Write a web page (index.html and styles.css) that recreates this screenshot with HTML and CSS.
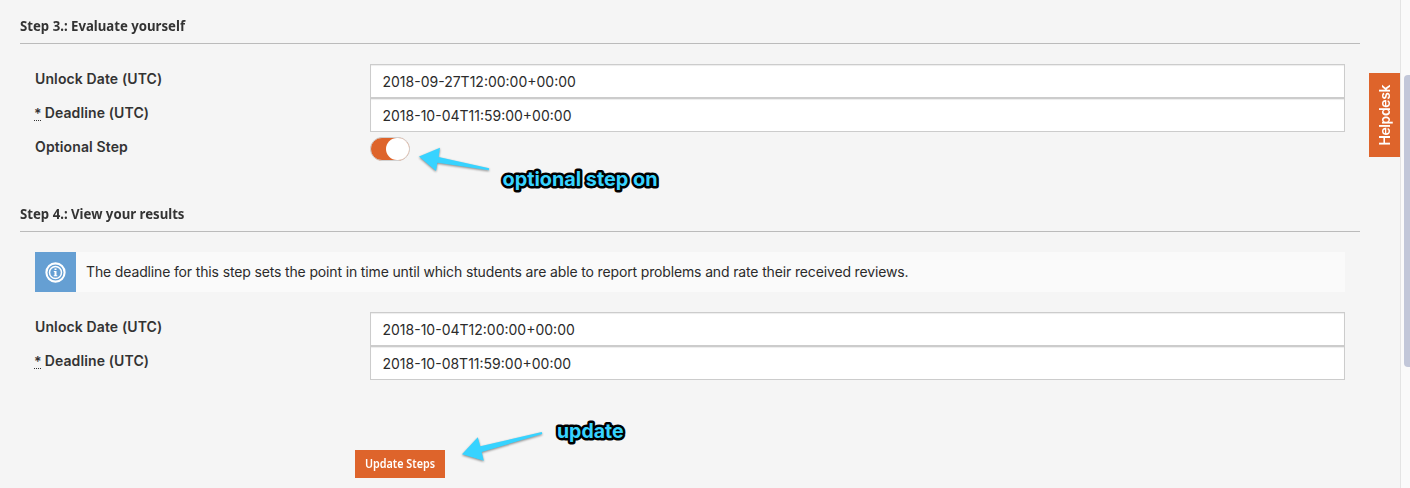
FILE: index.html
```html
<!DOCTYPE html>
<html lang="en">
<head>
<meta charset="utf-8">
<title>Update Steps</title>
<link rel="stylesheet" href="styles.css">
</head>
<body>
<div class="page">
  <main class="content">
    <section class="step step-evaluate">
      <h2 class="step-title"><span>Step 3.: Evaluate yourself</span></h2>
      <div class="fields">
        <div class="field"><label class="label">Unlock Date (UTC)</label><input class="input" value="2018-09-27T12:00:00+00:00"></div>
        <div class="field"><label class="label"><abbr class="req">*</abbr> Deadline (UTC)</label><input class="input" value="2018-10-04T11:59:00+00:00"></div>
        <div class="field"><span class="label">Optional Step</span><span class="toggle"><span class="knob"></span></span></div>
      </div>
    </section>
    <section class="step">
      <h2 class="step-title"><span>Step 4.: View your results</span></h2>
      <div class="notice">
        <div class="notice-icon">
          <svg width="21" height="21" viewBox="0 0 21 21">
            <circle cx="10.5" cy="10.5" r="9.1" fill="none" stroke="#fff" stroke-width="2.1"/>
            <circle cx="10.5" cy="10.5" r="6" fill="none" stroke="#fff" stroke-width="1.5"/>
            <path d="M9.500 6.500h2v1.600H9.500zM8.800 9h2.700v4.200h.8v1.100H8.700v-1.100h.8V10.100h-.7z" fill="#fff"/>
          </svg>
        </div>
        <p class="notice-text"><span>The deadline for this step sets the point in time until which students are able to report problems and rate their received reviews.</span></p>
      </div>
      <div class="fields">
        <div class="field"><label class="label">Unlock Date (UTC)</label><input class="input" value="2018-10-04T12:00:00+00:00"></div>
        <div class="field"><label class="label"><abbr class="req">*</abbr> Deadline (UTC)</label><input class="input" value="2018-10-08T11:59:00+00:00"></div>
      </div>
    </section>
    <button class="submit"><span>Update Steps</span></button>
  </main>
  <div class="scrollbar"><div class="thumb"></div></div>
  <div class="helpdesk"><span>Helpdesk</span></div>
  <svg class="notes" width="1410" height="488" viewBox="0 0 1410 488">
    <g class="arrow">
      <path d="M419 156.500 440 147.800 438.600 157 489.200 168.300 488.800 170.200 437.400 162.800 436 171z"/>
      <path d="M462 454.300 477.800 437.300 480.300 446.200 541.800 432 542.200 434 481.700 452 483.800 460.800z"/>
    </g>
    <text class="note" x="502.500" y="186" textLength="155" lengthAdjust="spacingAndGlyphs">optional step on</text>
    <text class="note" x="557" y="438" textLength="66.500" lengthAdjust="spacingAndGlyphs">update</text>
  </svg>
</div>
</body>
</html>
```
FILE: styles.css
```css
* { box-sizing: border-box; }
body { margin: 0; background: #f5f5f5; color: #333; font: 14px/20px Inter, "Liberation Sans", sans-serif; overflow: hidden; }
.page { position: relative; display: flex; height: 488px; overflow: hidden; }
.content { flex: 1; padding: 0 40px 0 20px; }
.step-title { margin: 0; height: 44px; padding-top: 16px; border-bottom: 1px solid #bbb; font: 700 14px/20px "Noto Sans", sans-serif; white-space: nowrap; }
.step-title span { display: inline-block; transform: scaleX(.942); transform-origin: 0 50%; }
.step-evaluate { height: 188px; }
.fields { padding: 20px 15px 0; }
.field { display: flex; height: 34px; }
.label { width: 335px; padding-top: 5px; font-weight: 600; letter-spacing: .12px; white-space: pre; }
.req { text-decoration: none; border-bottom: 1px dotted #333; display: inline-block; line-height: 14px; height: 14px; width: 7px; margin: 0 0 0 -1px; vertical-align: -1px; }
.input { flex: 1; min-width: 0; height: 34px; padding: 1px 12px 0; border: 1px solid #ccc; background: #fff; box-shadow: inset 0 1px 1px rgba(0,0,0,.075); color: #2b2b2b; font: 14px/20px Inter, sans-serif; text-indent: -.5px; border-radius: 0; }
.toggle { width: 40px; height: 24px; margin-top: 5px; border: 1px solid #d0d0d0; border-radius: 12px; background: #de642b; display: flex; justify-content: flex-end; }
.knob { width: 23px; height: 22px; border-radius: 11px; background: #fff; }
.notice { display: flex; height: 40px; margin: 20px 15px 0; background: #fafafa; }
.notice-icon { width: 41px; padding-right: 1px; display: flex; align-items: center; justify-content: center; background: #659fd3; }
.notice-text { margin: 0; padding: 10px; white-space: nowrap; letter-spacing: -.145px; color: #2b2b2b; }
.submit { display: flex; align-items: center; justify-content: center; width: 90px; height: 28px; margin: 70px 0 0 335px; padding: 0 1px 0 0; border: 0; background: #de642b; color: #fff; font: 600 12px/16px "Noto Sans", sans-serif; white-space: nowrap; }
.submit span { transform: scaleX(.9); }
.scrollbar { width: 10px; padding: 75px 0 0 3px; border-left: 1px solid #e4e4e4; background: #fafafa; }
.thumb { height: 292px; border-radius: 4px 0 0 4px; background: #c2c7d9; }
.helpdesk { position: absolute; left: 1369px; top: 73px; width: 31px; height: 84px; padding-top: 1px; display: flex; align-items: center; justify-content: center; background: #de642b; color: #fff; font: 600 14px/20px Inter, sans-serif; letter-spacing: -.4px; }
.helpdesk span { writing-mode: vertical-rl; transform: rotate(180deg); }
.notes { position: absolute; left: 0; top: 0; pointer-events: none; }
.arrow { fill: #37d3ff; filter: drop-shadow(0 1px 1px rgba(0,0,0,.45)); }
.note { font: 700 20px Inter, sans-serif; fill: #37d3ff; stroke: #000; stroke-width: 5px; stroke-linejoin: round; paint-order: stroke; }
```
